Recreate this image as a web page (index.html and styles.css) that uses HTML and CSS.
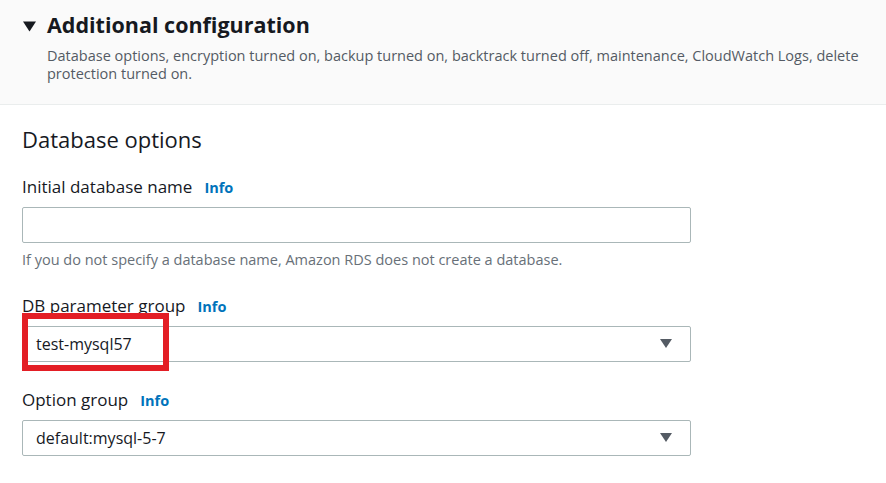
FILE: index.html
```html
<!DOCTYPE html>
<html>
<head>
<meta charset="utf-8">
<link rel="stylesheet" href="styles.css">
</head>
<body>
<div class="header">
  <div class="title-row">
    <svg class="caret" width="13" height="11" viewBox="0 0 13 11"><polygon points="0,0.5 13,0.5 6.5,10.5" fill="#16191f"/></svg>
    <h2 class="title">Additional configuration</h2>
  </div>
  <p class="desc">Database options, encryption turned on, backup turned on, backtrack turned off, maintenance, CloudWatch Logs, delete protection turned on.</p>
</div>
<div class="content">
  <h3 class="section">Database options</h3>

  <div class="field field-name">
    <div class="label">Initial database name<span class="info">Info</span></div>
    <div class="input"></div>
    <div class="hint">If you do not specify a database name, Amazon RDS does not create a database.</div>
  </div>

  <div class="field field-param">
    <div class="label">DB parameter group<span class="info">Info</span></div>
    <div class="select">
      <span class="value">test-mysql57</span>
      <svg class="arrow" width="12" height="9" viewBox="0 0 12 9"><polygon points="0,0 12,0 6,9" fill="#545b64"/></svg>
      <div class="highlight"></div>
    </div>
  </div>

  <div class="field field-option">
    <div class="label">Option group<span class="info">Info</span></div>
    <div class="select">
      <span class="value">default:mysql-5-7</span>
      <svg class="arrow" width="12" height="9" viewBox="0 0 12 9"><polygon points="0,0 12,0 6,9" fill="#545b64"/></svg>
    </div>
  </div>
</div>
</body>
</html>
```
FILE: styles.css
```css
html, body {
  margin: 0;
  padding: 0;
  background: #ffffff;
  font-family: "Open Sans", "Noto Sans", Arial, sans-serif;
  color: #16191f;
}

.header {
  box-sizing: border-box;
  background: #fafafa;
  border-bottom: 1px solid #eaeded;
  padding: 9px 10px 0 23px;
  height: 105px;
}

.title-row {
  display: flex;
  align-items: center;
  gap: 11px;
}

.caret {
  display: block;
  margin-top: 2px;
}

.title {
  margin: 0;
  font-size: 21.5px;
  font-weight: 700;
  line-height: 32px;
  color: #16191f;
}

.desc {
  margin: 6px 0 0 24px;
  font-size: 14.5px;
  line-height: 17.5px;
  color: #545b64;
}

.content {
  padding: 0 22px;
}

.section {
  margin: 0;
  padding-top: 18.5px;
  font-size: 22px;
  font-weight: 400;
  line-height: 30px;
  color: #16191f;
}

.field {
  width: 669px;
}

.field-name {
  margin-top: 22px;
}

.field-param {
  margin-top: 25px;
}

.field-option {
  margin-top: 27px;
}

.label {
  font-size: 17px;
  line-height: 22px;
  color: #16191f;
}

.info {
  color: #0073bb;
  font-weight: 700;
  font-size: 14.5px;
  margin-left: 12px;
}

.input,
.select {
  box-sizing: border-box;
  height: 36px;
  border: 1px solid #aab7b8;
  border-radius: 2px;
  background: #fff;
}

.input {
  margin-top: 8px;
}

.hint {
  margin-top: 7px;
  font-size: 14.5px;
  line-height: 20px;
  color: #687078;
}

.select {
  position: relative;
  margin-top: 8px;
  display: flex;
  align-items: center;
  justify-content: space-between;
  padding: 0 18px 0 13px;
  font-size: 16px;
}

.arrow {
  display: block;
}

.highlight {
  position: absolute;
  left: -1px;
  top: -14px;
  width: 147px;
  height: 58px;
  box-sizing: border-box;
  border: 6px solid #e31e25;
}
```
